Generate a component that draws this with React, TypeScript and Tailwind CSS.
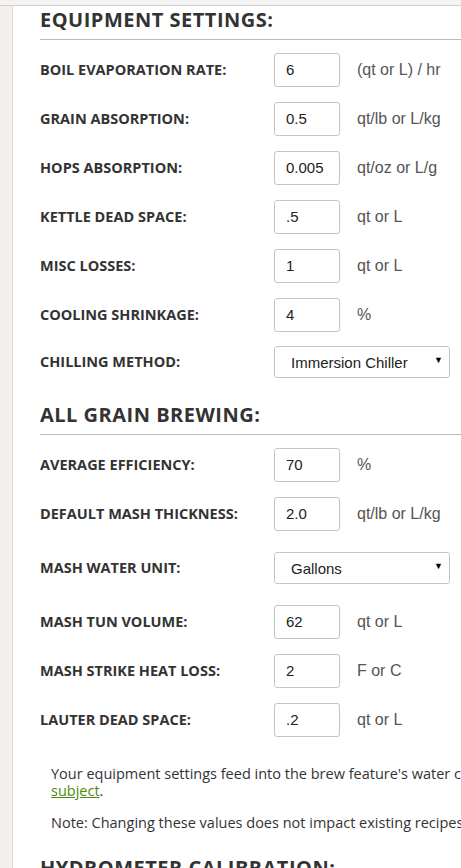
import React from 'react';

type Field = {
  label: string;
  value: string;
  unit?: string;
  select?: boolean;
  gap?: string;
};

const equipment: Field[] = [
  { label: 'BOIL EVAPORATION RATE:', value: '6', unit: '(qt or L) / hr' },
  { label: 'GRAIN ABSORPTION:', value: '0.5', unit: 'qt/lb or L/kg' },
  { label: 'HOPS ABSORPTION:', value: '0.005', unit: 'qt/oz or L/g' },
  { label: 'KETTLE DEAD SPACE:', value: '.5', unit: 'qt or L' },
  { label: 'MISC LOSSES:', value: '1', unit: 'qt or L' },
  { label: 'COOLING SHRINKAGE:', value: '4', unit: '%' },
  { label: 'CHILLING METHOD:', value: 'Immersion Chiller', select: true, gap: 'mt-[14px]' },
];

const allGrain: Field[] = [
  { label: 'AVERAGE EFFICIENCY:', value: '70', unit: '%' },
  { label: 'DEFAULT MASH THICKNESS:', value: '2.0', unit: 'qt/lb or L/kg' },
  { label: 'MASH WATER UNIT:', value: 'Gallons', select: true, gap: 'mt-[21px]' },
  { label: 'MASH TUN VOLUME:', value: '62', unit: 'qt or L', gap: 'mt-[21px]' },
  { label: 'MASH STRIKE HEAT LOSS:', value: '2', unit: 'F or C' },
  { label: 'LAUTER DEAD SPACE:', value: '.2', unit: 'qt or L' },
];

function SectionTitle({ children, className = '' }: { children: React.ReactNode; className?: string }) {
  return (
    <h2
      className={`pb-[5px] border-b border-[#bbbbbb] text-[20px] leading-[28px] font-bold tracking-[0.5px] text-[#333333] whitespace-nowrap ${className}`}
    >
      {children}
    </h2>
  );
}

function Row({ field, first }: { field: Field; first: boolean }) {
  const margin = first ? 'mt-[13px]' : field.gap ?? 'mt-[15px]';
  return (
    <div className={`flex items-center ${margin} ${field.select ? 'h-[32px]' : 'h-[34px]'}`}>
      <div className="w-[234px] shrink-0 text-[14.5px] font-bold text-[#333333] whitespace-nowrap">
        {field.label}
      </div>
      {field.select ? (
        <div className="w-[176px] h-[32px] flex items-center justify-between pl-[16px] pr-[6px] border border-[#c4c4c4] rounded-[3px] bg-white font-['Liberation_Sans',Arial,sans-serif] text-[15px] text-[#222222]">
          <span className="pt-[3px]">{field.value}</span>
          <span className="text-[9px] text-black -mt-[2px]">▼</span>
        </div>
      ) : (
        <>
          <div className="w-[66px] h-[34px] flex items-center pl-[11px] border border-[#c4c4c4] rounded-[3px] bg-white font-['Liberation_Sans',Arial,sans-serif] text-[15px] text-[#222222]">
            {field.value}
          </div>
          <span className="ml-[17px] font-['Liberation_Sans',Arial,sans-serif] text-[16px] text-[#555555] whitespace-nowrap">
            {field.unit}
          </span>
        </>
      )}
    </div>
  );
}

export default function App() {
  return (
    <div className="w-[461px] h-[868px] overflow-hidden bg-white font-['Open_Sans',sans-serif]">
      <div className="h-[6px] bg-[#f3f3f3] border-b border-[#d0d0d0]" />
      <div className="flex">
        <div className="w-[13px] shrink-0 bg-[#f3f0eb] border-r border-[#dcdcdc]" />
        <div className="pl-[27px] w-[720px] shrink-0">
          {/* Equipment */}
          <SectionTitle>EQUIPMENT SETTINGS:</SectionTitle>
          {equipment.map((f, i) => (
            <Row key={f.label} field={f} first={i === 0} />
          ))}

          {/* All grain */}
          <SectionTitle className="mt-[23px]">ALL GRAIN BREWING:</SectionTitle>
          {allGrain.map((f, i) => (
            <Row key={f.label} field={f} first={i === 0} />
          ))}

          <div className="pl-[11px] mt-[28px] text-[14.5px] leading-[17px] text-[#333333]">
            <p className="whitespace-nowrap">
              Your equipment settings feed into the brew feature's water calculations. See our guide on this
              <br />
              <a className="text-[#4f8a10] underline">subject</a>.
            </p>
            <p className="mt-[15px] whitespace-nowrap">
              Note: Changing these values does not impact existing recipes.
            </p>
          </div>

          <SectionTitle className="mt-[23px]">HYDROMETER CALIBRATION:</SectionTitle>
        </div>
      </div>
    </div>
  );
}
